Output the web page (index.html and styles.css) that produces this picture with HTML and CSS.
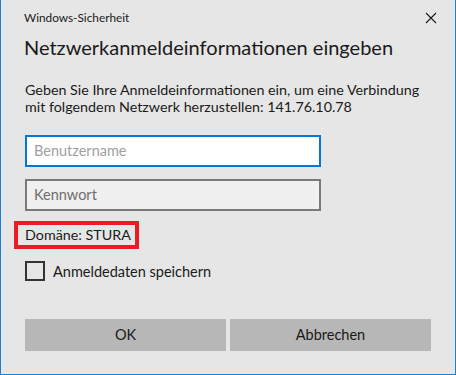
FILE: index.html
```html
<!DOCTYPE html>
<html lang="de">
<head>
    <meta charset="UTF-8">
    <title>Windows-Sicherheit</title>
    <link rel="stylesheet" href="styles.css">
</head>
<body>
    <div class="dialog">
        <div class="title-bar">
            <span class="title-text">Windows-Sicherheit</span>
            <svg class="close-icon" width="12" height="12" viewBox="0 0 12 12">
                <path d="M1 1 L11 11 M11 1 L1 11" stroke="#1a1a1a" stroke-width="1.1" fill="none"/>
            </svg>
        </div>
        <h1 class="heading">Netzwerkanmeldeinformationen eingeben</h1>
        <p class="message">Geben Sie Ihre Anmeldeinformationen ein, um eine Verbindung<br>mit folgendem Netzwerk herzustellen: 141.76.10.78</p>
        <div class="field field-active">Benutzername</div>
        <div class="field">Kennwort</div>
        <div class="domain">Domäne: STURA</div>
        <label class="remember">
            <span class="checkbox"></span>
            <span>Anmeldedaten speichern</span>
        </label>
        <div class="buttons">
            <div class="btn">OK</div>
            <div class="btn">Abbrechen</div>
        </div>
    </div>
</body>
</html>
```

FILE: styles.css
```css
body {
    margin: 0;
    background-color: #e6e6e6;
    font-family: 'Lato', 'Noto Sans', sans-serif;
    color: #1a1a1a;
}
.dialog {
    box-sizing: border-box;
    width: 456px;
    height: 375px;
    background-color: #e6e6e6;
    border: 1px solid #1883d7;
    border-top: none;
    padding: 0 24px 0 23px;
}
.title-bar {
    display: flex;
    justify-content: space-between;
    align-items: center;
    height: 34px;
}
.title-text {
    font-size: 11.8px;
    margin-top: 1px;
}
.close-icon {
    margin-right: -6px;
    margin-top: 1px;
}
.heading {
    font-size: 20px;
    font-weight: normal;
    margin: 0;
    line-height: 26px;
}
.message {
    font-size: 14.3px;
    line-height: 17px;
    margin: 21px 0 0 1px;
    white-space: nowrap;
}
.field {
    box-sizing: border-box;
    width: 296px;
    height: 32px;
    margin-left: 1px;
    border: 2px solid #7a7a7a;
    background-color: #f0f0f0;
    color: #6d6d6d;
    font-size: 14.5px;
    line-height: 28px;
    padding-left: 7px;
}
.field-active {
    margin-top: 20px;
    border-color: #0078d7;
    background-color: #ffffff;
    color: #a0a0a0;
}
.field + .field {
    margin-top: 12px;
}
.domain {
    display: inline-block;
    margin: 10px 0 0 -10px;
    border: 4px solid #ed1c24;
    padding: 0 4px 0 7px;
    font-size: 14.3px;
    line-height: 20px;
}
.remember {
    display: flex;
    align-items: center;
    margin: 12px 0 0 1px;
    font-size: 14.5px;
}
.checkbox {
    box-sizing: border-box;
    width: 20px;
    height: 20px;
    border: 2px solid #333333;
    margin-right: 8px;
}
.buttons {
    display: grid;
    grid-template-columns: 201px 201px;
    gap: 4px;
    margin: 38px 0 0 1px;
}
.btn {
    height: 32px;
    background-color: #b7b7b7;
    text-align: center;
    line-height: 32px;
    font-size: 14.5px;
}
```
